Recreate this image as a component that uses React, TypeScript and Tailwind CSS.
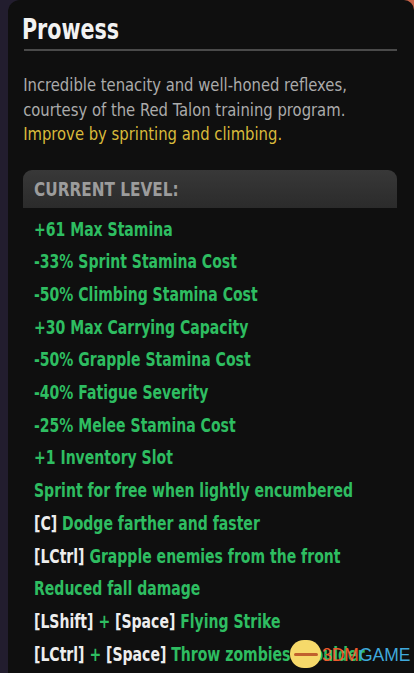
const font = { fontFamily: '"DejaVu Sans Condensed", "Liberation Sans", sans-serif' };

type Part = { t: string; key?: boolean };

const items: Part[][] = [
  [{ t: '+61 Max Stamina' }],
  [{ t: '-33% Sprint Stamina Cost' }],
  [{ t: '-50% Climbing Stamina Cost' }],
  [{ t: '+30 Max Carrying Capacity' }],
  [{ t: '-50% Grapple Stamina Cost' }],
  [{ t: '-40% Fatigue Severity' }],
  [{ t: '-25% Melee Stamina Cost' }],
  [{ t: '+1 Inventory Slot' }],
  [{ t: 'Sprint for free when lightly encumbered' }],
  [{ t: '[C]', key: true }, { t: ' Dodge farther and faster' }],
  [{ t: '[LCtrl]', key: true }, { t: ' Grapple enemies from the front' }],
  [{ t: 'Reduced fall damage' }],
  [{ t: '[LShift]', key: true }, { t: ' + ' }, { t: '[Space]', key: true }, { t: ' Flying Strike' }],
  [{ t: '[LCtrl]', key: true }, { t: ' + ' }, { t: '[Space]', key: true }, { t: ' Throw zombies shoulder' }],
];

export default function App() {
  return (
    <div className="relative w-[414px] h-[673px] overflow-hidden bg-[#221d2e] flex" style={font}>
      <div className="absolute right-[-6px] top-[-6px] w-[18px] h-[18px] rounded-full bg-[#c8644a]" />
      <div className="relative ml-[8px] w-[406px] shrink-0 min-w-0 overflow-hidden bg-[#0f0f0f] rounded-tl-[12px] rounded-tr-[10px] pt-[13px]">
        <h1 className="pl-[17px] text-[28px] font-bold text-[#f2f2f2] leading-[34px] origin-left scale-x-[0.82] whitespace-nowrap">Prowess</h1>
        <div className="ml-[16px] mr-[17px] mt-[2px] h-[2px] bg-[#4a4a4a]" />
        <div className="pl-[17px] mt-[22px] text-[18.5px] leading-[24.5px] text-[#ababab] origin-left scale-x-[0.89] whitespace-nowrap">
          <p>Incredible tenacity and well-honed reflexes,</p>
          <p>courtesy of the Red Talon training program.</p>
          <p className="text-[#d9bb3b]">Improve by sprinting and climbing.</p>
        </div>
        <div className="ml-[15px] mr-[17px] mt-[23px] h-[38px] rounded-t-[9px] bg-gradient-to-b from-[#383838] to-[#2b2b2b] flex items-center pl-[11px]">
          <span className="text-[20px] font-bold text-[#9c9c9c] origin-left scale-x-[0.85] whitespace-nowrap">CURRENT LEVEL:</span>
        </div>
        <ul className="pl-[26px] mt-[6px] text-[19.5px] font-bold leading-[32.7px] text-[#2ebd61]">
          {items.map((row, i) => (
            <li key={i} className="whitespace-nowrap origin-left scale-x-[0.8]">
              {row.map((p, j) => (
                <span key={j} className={p.key ? 'text-[#ededed]' : ''}>{p.t}</span>
              ))}
            </li>
          ))}
        </ul>
        <div className="absolute left-[282px] bottom-[5px] flex items-center">
          <div className="w-[31px] h-[28px] rounded-full bg-[#f6d96a] flex items-center justify-center">
            <div className="w-[24px] h-[3px] bg-[#c0602e] rounded-full" />
          </div>
          <span className="ml-[1px] mt-[4px] text-[17.5px] leading-none" style={{ fontFamily: '"Liberation Sans", sans-serif' }}>
            <span className="text-[#ee5a2c]">3DM</span>
            <span className="text-[#3fa9dc]">GAME</span>
          </span>
        </div>
      </div>
    </div>
  );
}
